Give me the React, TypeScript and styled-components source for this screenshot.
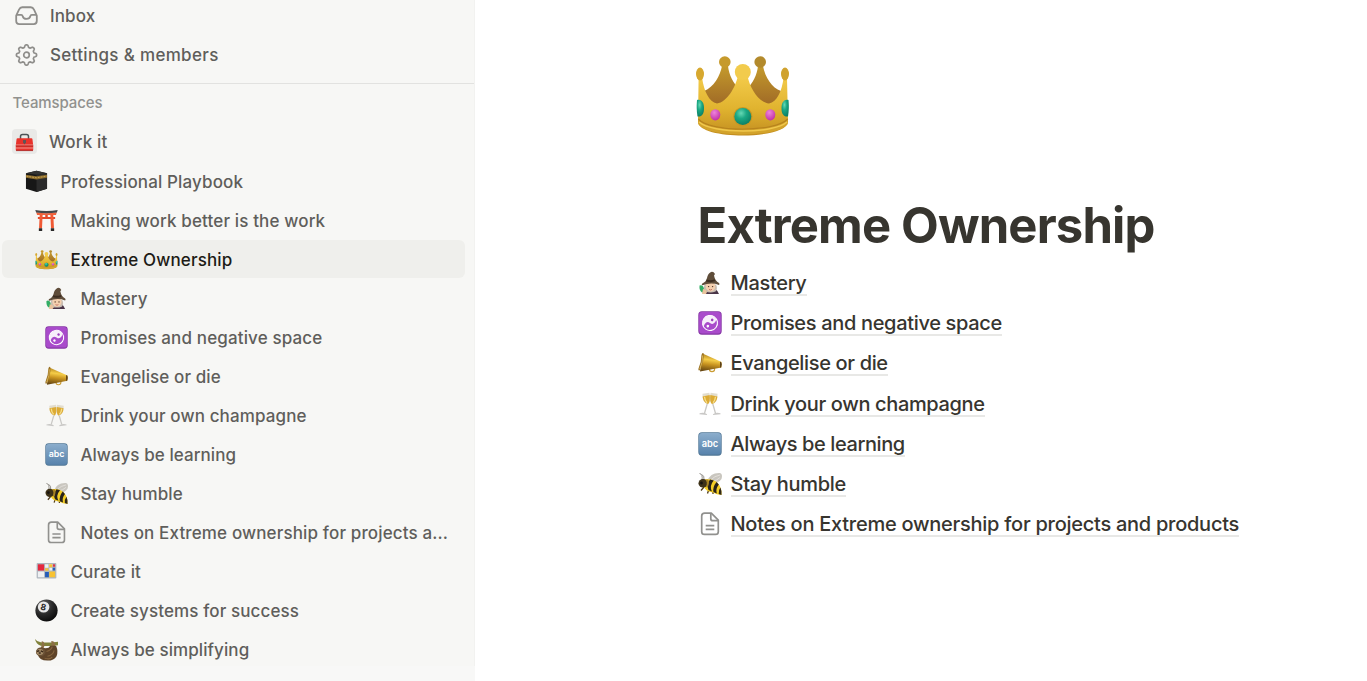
import React from "react";
import styled, { createGlobalStyle } from "styled-components";

const GlobalStyle = createGlobalStyle`
  * { box-sizing: border-box; }
  body { margin: 0; background: #fff; font-family: Inter, "Liberation Sans", sans-serif; }
  svg { display: block; overflow: visible; flex: none; }
`;

const Page = styled.div`
  display: flex;
  height: 681px;
  overflow: hidden;
`;

const Sidebar = styled.nav`
  width: 475px;
  flex: none;
  display: flex;
  flex-direction: column;
  background: #f8f8f7;
`;

const SidebarScroll = styled.div`
  height: 666px;
  background: #f7f7f5;
  border-right: 1px solid #f2f2f0;
`;

const MenuRow = styled.div`
  height: 39px;
  padding: 0 0 1px 15px;
  display: flex;
  align-items: center;
  gap: 12px;
  &:first-child { height: 36px; padding-bottom: 4px; }
`;

const Section = styled.div`
  height: 38px;
  margin-top: 8px;
  padding: 0 0 1px 12.5px;
  border-top: 1px solid #e2e2e0;
  display: flex;
  align-items: center;
  color: #91918e;
  font-size: 15px;
  font-weight: 500;
  letter-spacing: -0.1px;
`;

const Space = styled.div`
  height: 41px;
  padding-left: 12px;
  display: flex;
  align-items: center;
  gap: 12px;
`;

const SpaceBadge = styled.span`
  width: 25px;
  height: 25px;
  padding: 2px 1px 0 0;
  border-radius: 4px;
  background: #e9e9e7;
  display: grid;
  place-items: center;
`;

const TreeRow = styled.div<{ $depth: number; $active?: boolean }>`
  height: 38px;
  margin: 0 9px 1px 2px;
  padding-top: 1px;
  padding-left: ${(p) => 13 + p.$depth * 10}px;
  border-radius: 6px;
  display: flex;
  align-items: center;
  gap: 12.4px;
  background: ${(p) => (p.$active ? "#efefec" : "transparent")};
  --label: ${(p) => (p.$active ? "#1d1b16" : "#5f5e5b")};
  svg { width: 23px; height: 23px; }
`;

const Label = styled.span<{ $track: number }>`
  color: var(--label, #5f5e5b);
  font-size: 17px;
  font-weight: 500;
  line-height: 22px;
  white-space: nowrap;
  letter-spacing: ${(p) => p.$track}px;
`;

const Main = styled.main`
  flex: 1;
  padding: 50px 0 0 220px;
`;

const Title = styled.h1`
  margin: 56px 0 0 2.5px;
  height: 60px;
  color: #37352f;
  font-size: 49px;
  font-weight: 700;
  line-height: 60px;
  letter-spacing: -0.85px;
  white-space: nowrap;
`;

const Links = styled.div`
  margin: 7px 0 0 2.5px;
  display: flex;
  flex-direction: column;
`;

const LinkRow = styled.div`
  height: 40.2px;
  display: flex;
  align-items: center;
  gap: 9px;
`;

const LinkText = styled.span<{ $track: number }>`
  padding-top: 2px;
  color: #37352f;
  font-size: 20px;
  font-weight: 500;
  line-height: 22px;
  white-space: nowrap;
  border-bottom: 2px solid #e8e8e6;
  letter-spacing: ${(p) => p.$track}px;
`;

type IconProps = { size?: number };

const Crown = ({ size = 24 }: IconProps) => (
  <svg width={size} height={(size * 90) / 96} viewBox="0 0 96 90">
    <defs>
      <linearGradient id="crownBack" x1="0" y1="0" x2="0" y2="1">
        <stop offset="0" stopColor="#c49a2c" />
        <stop offset="1" stopColor="#9c6526" />
      </linearGradient>
      <linearGradient id="crownFront" x1="0" y1="0" x2="0" y2="1">
        <stop offset="0" stopColor="#f3cb4a" />
        <stop offset="0.55" stopColor="#e0b32f" />
        <stop offset="1" stopColor="#c28d20" />
      </linearGradient>
      <radialGradient id="crownTeal" cx="0.4" cy="0.3" r="0.7">
        <stop offset="0" stopColor="#66d8b4" />
        <stop offset="0.45" stopColor="#1ba884" />
        <stop offset="1" stopColor="#0c8066" />
      </radialGradient>
      <radialGradient id="crownPink" cx="0.4" cy="0.3" r="0.7">
        <stop offset="0" stopColor="#ee83dc" />
        <stop offset="1" stopColor="#c232a8" />
      </radialGradient>
    </defs>
    <path d="M9 41C19 37 25 26 27 16h6c1 9 5 17 12 24h6c7-7 11-15 12-24h5c2 11 9 22 18 25l-5 18H14z" fill="url(#crownBack)" />
    <circle cx="29.8" cy="12" r="5.8" fill="#c69a2c" />
    <circle cx="65.2" cy="12" r="5.8" fill="#b38a2c" />
    <path d="M3.600 28h3.500C9 41 14 52 22 53.500C32 52 40 38 43 26h9.500C55 38 63 52 74 53.500C82 52 87 41 88.500 28H92L93 72C91 90 4 90 3 72z" fill="url(#crownFront)" />
    <path d="M3.300 68C15 82 80 82 92.700 68v6C83 88 13 88 3.300 74z" fill="#d3a32b" />
    <path d="M3.300 69C15 82.500 80 82.500 92.700 69" fill="none" stroke="#b7831d" strokeWidth="1.200" />
    <path d="M4 72C17 84 79 84 92 72" fill="none" stroke="#f0c84d" strokeWidth="1.500" />
    <ellipse cx="5" cy="24" rx="4" ry="6.500" fill="#d7a82f" />
    <ellipse cx="90" cy="24" rx="4" ry="6.500" fill="#d0a22f" />
    <circle cx="47.800" cy="22" r="8" fill="#f2cb4c" />
    <path d="M2 50c4-1 7 2 7 8s-2 9-6.500 8.500C1.500 61 1.500 55 2 50z" fill="url(#crownTeal)" />
    <path d="M93.500 50c-4-1-7 2-7 8s2 9 6.500 8.500c1-5.500 1-11.500.5-16.500z" fill="url(#crownTeal)" />
    <circle cx="47.800" cy="66.600" r="9.600" fill="#c89622" />
    <circle cx="47.800" cy="66.600" r="8.500" fill="url(#crownTeal)" />
    <ellipse cx="20.300" cy="64.800" rx="5" ry="5.600" fill="url(#crownPink)" />
    <ellipse cx="75.300" cy="64.800" rx="5" ry="5.600" fill="url(#crownPink)" />
  </svg>
);

const InboxIcon = () => (
  <svg width="23" height="21" viewBox="0 0 23 20" preserveAspectRatio="none" fill="none" stroke="#8f8e8b" strokeWidth="1.800" strokeLinejoin="round">
    <path d="M1.200 9.100 4 3.400C4.700 2 5.600 1.200 7.200 1.200h8.600c1.600 0 2.500.8 3.200 2.200l2.800 5.700v5c0 2-1.100 3.200-3.200 3.200H4.400c-2.100 0-3.200-1.200-3.200-3.200z" />
    <path d="M1.400 8.500h4.800c.9 0 1.300.5 1.500 1.300.4 1.500 1.900 2.500 3.800 2.500s3.400-1 3.800-2.500c.2-.8.600-1.300 1.500-1.300h4.800" />
  </svg>
);

const gearPath = (() => {
  const points: string[] = [];
  for (let i = 0; i <= 96; i++) {
    const a = (i / 96) * Math.PI * 2 - Math.PI / 2;
    const wave = Math.tanh(2.2 * Math.cos(8 * (a + Math.PI / 2)));
    const r = 8.9 + 1.2 * wave;
    points.push(`${(11.5 + r * Math.cos(a)).toFixed(2)} ${(11.5 + r * Math.sin(a)).toFixed(2)}`);
  }
  return `M${points.join("L")}Z`;
})();

const GearIcon = () => (
  <svg width="23" height="23" viewBox="0 0.5 23 23" fill="none" stroke="#8f8e8b" strokeWidth="1.700" strokeLinejoin="round">
    <path d={gearPath} />
    <circle cx="11.500" cy="11.500" r="2.800" />
  </svg>
);

const Toolbox = () => (
  <svg width="19" height="19" viewBox="0 0 19 19">
    <path d="M5.500 6V3.500c0-1.500.7-2 2-2h4c1.300 0 2 .5 2 2V6" fill="none" stroke="#4c5356" strokeWidth="1.500" />
    <path d="M1.500 6.500Q1.500 5.300 2.700 5.300h13.600q1.200 0 1.200 1.200l.7 6v4.500q0 .8-.8.800H1.600q-.8 0-.8-.8v-4.500z" fill="#e8322b" />
    <path d="M.8 12h17.400M1 15h17" stroke="#f2a09b" strokeWidth=".9" />
    <path d="M.8 13h17.400M1 17.600h17" stroke="#9f211e" strokeWidth=".7" />
    <path d="M8 7h3v2.500L9.500 11.500 8 9.500z" fill="#5f5557" />
  </svg>
);

const Kaaba = () => (
  <svg width="24" height="24" viewBox="0 0 24 24">
    <path d="M1 3.500 12 .8l11 2.700v16L12 23 1 19.500z" fill="#171717" />
    <path d="M12 5 23 3.500v16L12 23z" fill="#2b2b2b" />
    <path d="m1 3.500 11-2.700 11 2.700L12 5z" fill="#343432" />
    <path d="M1 4.900 12 6.400l11-1.500v3.300L12 9.800 1 8.200z" fill="#8a6a2c" />
    <path d="M1.500 6.500 12 8.100l10.500-1.600" fill="none" stroke="#caa552" strokeWidth="1" strokeDasharray="2 1" />
  </svg>
);

const Torii = () => (
  <svg width="24" height="24" viewBox="0 0 24 24">
    <path d="M3 8.300h18v2.200H3zM10.700 5h2.600v4h-2.600z" fill="#e34a2c" />
    <path d="M5 5h3l-.7 15H4.200zM16 5h3l.8 15h-3.100z" fill="#f05a35" />
    <path d="M1.300 3.500q10.700 2 21.400 0l-.8 2.800H2.100z" fill="#f0633d" />
    <path d="M.3 1Q12 3.400 23.700 1l-.9 2.600q-10.800 1.600-21.600 0z" fill="#45474a" />
    <path d="M4 20h3.500v3H4zM16.500 20H20v3h-3.500z" fill="#2b2a2a" />
  </svg>
);

const Mage = () => (
  <svg width="24" height="24" viewBox="0 0 24 24">
    <path d="M5 23q1-7 7-7t9 7z" fill="#4a3548" />
    <path d="M6.500 13.500q-1.500 5 1 7 5 2 10 0 2.500-3 .5-7z" fill="#c8bdb2" />
    <ellipse cx="12.500" cy="15.500" rx="4.800" ry="5" fill="#f4cfae" />
    <path d="M1.500 14.500q3-1 4 1.500L7 21.500H4q-3-2-2.500-7z" fill="#32ad64" />
    <path d="M5 18q3 0 4 3l-1 2H4z" fill="#eac49e" />
    <path d="M4.300 12.500Q8 11 9 7q.8-4.500 4-6 2.500-.8 4 2l-1 1.500q1 5.500 5 7.500 1 1 0 2-8-3-16.500.3-1.500-.8-.2-1.800z" fill="#5f4d3a" />
    <path d="M8.700 8.500q4 1.500 7.800-.2l.7 1.800q-4.700 2-9.200.3z" fill="#3d2e22" />
    <circle cx="10.600" cy="15.600" r=".7" fill="#4a3022" />
    <circle cx="14.600" cy="15.600" r=".7" fill="#4a3022" />
    <path d="M11 18.400q1.500 1.200 3 0" fill="none" stroke="#b95c52" strokeWidth=".8" />
  </svg>
);

const YinYang = () => (
  <svg width="24" height="24" viewBox="0 0 24 24">
    <rect x=".3" y=".3" width="23.400" height="23.400" rx="3.600" fill="#8536a4" />
    <rect x="1.100" y="1" width="21.800" height="21.500" rx="3" fill="#a94bcb" />
    <g transform="rotate(35 12 12)">
      <circle cx="12" cy="12" r="7.500" fill="#a94bcb" stroke="#fff" strokeWidth="1.100" />
      <path d="M12 4.500a7.500 7.500 0 0 0 0 15 3.750 3.750 0 0 0 0-7.500 3.750 3.750 0 0 1 0-7.500z" fill="#f7effa" transform="matrix(1 0 0 -1 0 24)" />
      <circle cx="12" cy="8.250" r="1.300" fill="#9b3fbc" />
      <circle cx="12" cy="15.750" r="1.300" fill="#fff" />
    </g>
  </svg>
);

const Megaphone = () => (
  <svg width="24" height="24" viewBox="0 0 24 24">
    <defs>
      <linearGradient id="horn" x1=".5" y1="0" x2=".35" y2="1">
        <stop offset="0" stopColor="#a87818" />
        <stop offset=".35" stopColor="#f5cd48" />
        <stop offset=".6" stopColor="#c99420" />
        <stop offset="1" stopColor="#654511" />
      </linearGradient>
    </defs>
    <circle cx="14" cy="18" r="2.600" fill="none" stroke="#c99b32" strokeWidth="1.200" />
    <path d="M4.500 2.500 23.500 11v5.500L2 20.500z" fill="url(#horn)" />
    <path d="M5.500 2q1 8.500-4 17.500-1.500.5-1-2Q3.500 10.500 3.500 4q.5-2.500 2-2z" fill="#987022" />
    <path d="M4.500 4.500Q5 11 1.800 18" fill="none" stroke="#eac563" strokeWidth=".8" />
    <path d="M22 10.500q2 .3 1.800 3T22 17z" fill="#5c4117" />
  </svg>
);

const Flute = () => (
  <>
    <path d="M4.500 1.800 11.400.7q2 8-1.400 11.800Q4.200 11 4.500 1.800z" fill="#e2ddcf" />
    <path d="M4.600 4.400 11.700 3q.8 7-1.700 8.900Q5 10.500 4.600 4.400z" fill="#dcab35" />
    <path d="M6.500 4.800q.3 3.800 2.500 6" stroke="#f7df8c" strokeWidth="1.300" fill="none" />
    <path d="M9.200 12 6.500 21.300" stroke="#c9c8c5" strokeWidth="1.300" />
    <path d="M1.600 21.300q4-1.200 7.500.9l-.2.900-7.500-.8z" fill="#c9c8c6" />
  </>
);

const Champagne = () => (
  <svg width="24" height="24" viewBox="0 0 24 24">
    <Flute />
    <g transform="matrix(-1 0 0 1 24 0)"><Flute /></g>
  </svg>
);

const Abc = () => (
  <svg width="24" height="24" viewBox="0 0 24 24">
    <defs>
      <linearGradient id="abcFill" x1="0" y1="0" x2="0" y2="1">
        <stop offset="0" stopColor="#8badcc" />
        <stop offset="1" stopColor="#5883ac" />
      </linearGradient>
    </defs>
    <rect x=".3" y=".3" width="23.400" height="23.400" rx="3.600" fill="#527897" />
    <rect x="1" y="1" width="22" height="21.600" rx="3" fill="url(#abcFill)" />
    <text x="12" y="15" textAnchor="middle" fontSize="9.300" fontWeight="600" fill="#fff" letterSpacing="-.1">abc</text>
  </svg>
);

const Bee = () => (
  <svg width="24" height="24" viewBox="0 0 24 24">
    <path d="M9.500 9Q12 .5 22 1q3 1 1.500 6-3.500 5-9.500 4z" fill="#c9c6bf" />
    <path d="M12 8.500q5-5 10-5.500M14 9.500q5-1 8-4" stroke="#e8e5df" strokeWidth=".8" fill="none" />
    <path d="M4 8Q5 2 1.500 1.500M6 8Q6.500 4 4 2.500" stroke="#77736d" strokeWidth=".8" fill="none" />
    <path d="M6 15 3 18.500M11 17 9.500 21.500M15 18v4" stroke="#4f3a19" strokeWidth="1.300" />
    <path d="M7 7.500q9-1 13.500 4.500Q24 16.500 23.500 23q-5-.5-8.500-2.500-7-1-9-5.500z" fill="#f4ce26" />
    <path d="M12 7.500q-4 5.500-1.500 10.500l3.500 1.500q-3-5.500 1.700-11zM18.500 10q-4 5-3 10l3.300 1.500q-1.500-4.500 2-9z" fill="#28221b" />
    <path d="M22.400 15.500q-2 2.500-1.700 6.500l2.800 1q.5-4-1.100-7.500z" fill="#302718" />
    <ellipse cx="5" cy="11.300" rx="4.500" ry="4.300" fill="#3d3117" />
    <circle cx="3.500" cy="11" r="1.400" fill="#17130e" />
    <path d="M7 7.500q3 2 1 8l2-1q2-5 0-7z" fill="#a78222" />
  </svg>
);

const DocumentIcon = () => (
  <svg width="24" height="24" viewBox="0 0 24 24" fill="none" stroke="#91918e" strokeWidth="1.700" strokeLinejoin="round">
    <path d="M6.700 1.200h6.600l7 7v11.500q0 2.700-2.700 2.700H6.400q-2.700 0-2.700-2.700V4.100q0-2.900 3-2.900z" />
    <path d="M12.800 1.500v5.200q0 2 2 2h5.200M7.700 13.600h8.600M7.700 17.300h8.600" />
  </svg>
);

const ColorBlocks = () => (
  <svg width="24" height="24" viewBox="0 0 24 24">
    <rect x="1.700" y="3.200" width="20.600" height="16" rx="1" fill="#aeb6be" />
    <path d="M3 4.500h6.500v6.500H3z" fill="#e5283e" />
    <path d="M10.500 4.500H14V8h-3.500zM3 12h6.500v6H3zM15 8h3v3h-3zM14.800 4.500H18V7h-3.200z" fill="#eef0f2" />
    <path d="M14.800 4.500h3.200v3h-3.200zM15 12h6v6h-6z" fill="#f8c332" />
    <path d="M18.700 4.500h2.300V7h-2.300z" fill="#dd3349" />
    <path d="M10.500 8.700H14v2.500h-3.500z" fill="#f6c33a" />
    <path d="M10.500 12.500h4V18h-4zM18.500 8h2.500v3h-2.500z" fill="#255cb8" />
  </svg>
);

const EightBall = () => (
  <svg width="24" height="24" viewBox="0 0 24 24">
    <defs>
      <radialGradient id="ball" cx=".35" cy=".25" r=".8">
        <stop offset="0" stopColor="#666" />
        <stop offset=".55" stopColor="#292929" />
        <stop offset="1" stopColor="#090909" />
      </radialGradient>
    </defs>
    <circle cx="12" cy="12" r="11.600" fill="url(#ball)" />
    <ellipse cx="9" cy="8.300" rx="6" ry="5.800" fill="#e9e9e9" />
    <text x="8.700" y="11.600" textAnchor="middle" fontSize="9" fontWeight="700" fill="#262626" transform="rotate(12 8.700 8)">8</text>
  </svg>
);

const Sloth = () => (
  <svg width="24" height="24" viewBox="0 0 24 24">
    <path d="M0 1q2 3 6 3.500 8 .8 18-.7v3.700Q13 9 6 8 1 6.500 0 1z" fill="#80813a" />
    <path d="M7 3.500q3 0 3 4l-2 6-4-1q4-3 3-9zM17 3q4 0 4 4l-1 8h-5q3-5 2-12z" fill="#8d7046" />
    <path d="M7 10q7 2 9-2h6q2.500 6 .5 11-3 4.800-9.500 4.600Q4 23.600 3 17q1-5 4-7z" fill="#5f4429" />
    <path d="M12 14q5-1 6-5M13 19q6-1 7-6M10 21q5 2 8-1" stroke="#866640" strokeWidth="1.100" fill="none" />
    <ellipse cx="6" cy="14.500" rx="5" ry="4.700" fill="#695035" />
    <ellipse cx="5.200" cy="14.600" rx="3.600" ry="3.100" fill="#a58c68" />
    <path d="m2 14 2.500-.7M6 13.500l2.500 1" stroke="#392717" strokeWidth="1.500" />
    <ellipse cx="5" cy="15.700" rx="1.300" ry=".8" fill="#2b2019" />
  </svg>
);

type Entry = { icon: React.ReactNode; text: string; depth: number; track: number; active?: boolean };

const tree: Entry[] = [
  { icon: <Kaaba />, text: "Professional Playbook", depth: 1, track: 0.13 },
  { icon: <Torii />, text: "Making work better is the work", depth: 2, track: 0.14 },
  { icon: <Crown />, text: "Extreme Ownership", depth: 2, track: 0.13, active: true },
  { icon: <Mage />, text: "Mastery", depth: 3, track: 0.1 },
  { icon: <YinYang />, text: "Promises and negative space", depth: 3, track: 0.14 },
  { icon: <Megaphone />, text: "Evangelise or die", depth: 3, track: 0.1 },
  { icon: <Champagne />, text: "Drink your own champagne", depth: 3, track: 0.12 },
  { icon: <Abc />, text: "Always be learning", depth: 3, track: 0.07 },
  { icon: <Bee />, text: "Stay humble", depth: 3, track: 0.15 },
  { icon: <DocumentIcon />, text: "Notes on Extreme ownership for projects a...", depth: 3, track: 0.14 },
  { icon: <ColorBlocks />, text: "Curate it", depth: 2, track: 0.18 },
  { icon: <EightBall />, text: "Create systems for success", depth: 2, track: 0.11 },
  { icon: <Sloth />, text: "Always be simplifying", depth: 2, track: 0.08 },
];

const links = [
  { icon: <Mage />, text: "Mastery", track: -0.32 },
  { icon: <YinYang />, text: "Promises and negative space", track: -0.33 },
  { icon: <Megaphone />, text: "Evangelise or die", track: -0.35 },
  { icon: <Champagne />, text: "Drink your own champagne", track: -0.36 },
  { icon: <Abc />, text: "Always be learning", track: -0.41 },
  { icon: <Bee />, text: "Stay humble", track: -0.29 },
  { icon: <DocumentIcon />, text: "Notes on Extreme ownership for projects and products", track: -0.26 },
];

export default function App() {
  return (
    <Page>
      <GlobalStyle />
      <Sidebar>
        <SidebarScroll>
          <MenuRow><InboxIcon /><Label $track={0.1}>Inbox</Label></MenuRow>
          <MenuRow><GearIcon /><Label $track={0.32}>Settings &amp; members</Label></MenuRow>
          <Section>Teamspaces</Section>
          <Space>
            <SpaceBadge><Toolbox /></SpaceBadge>
            <Label $track={0.15}>Work it</Label>
          </Space>
          {tree.map((row) => (
            <TreeRow key={row.text} $depth={row.depth} $active={row.active}>
              {row.icon}
              <Label $track={row.track}>{row.text}</Label>
            </TreeRow>
          ))}
        </SidebarScroll>
      </Sidebar>
      <Main>
        <Crown size={96} />
        <Title>Extreme Ownership</Title>
        <Links>
          {links.map((link) => (
            <LinkRow key={link.text}>
              {link.icon}
              <LinkText $track={link.track}>{link.text}</LinkText>
            </LinkRow>
          ))}
        </Links>
      </Main>
    </Page>
  );
}
